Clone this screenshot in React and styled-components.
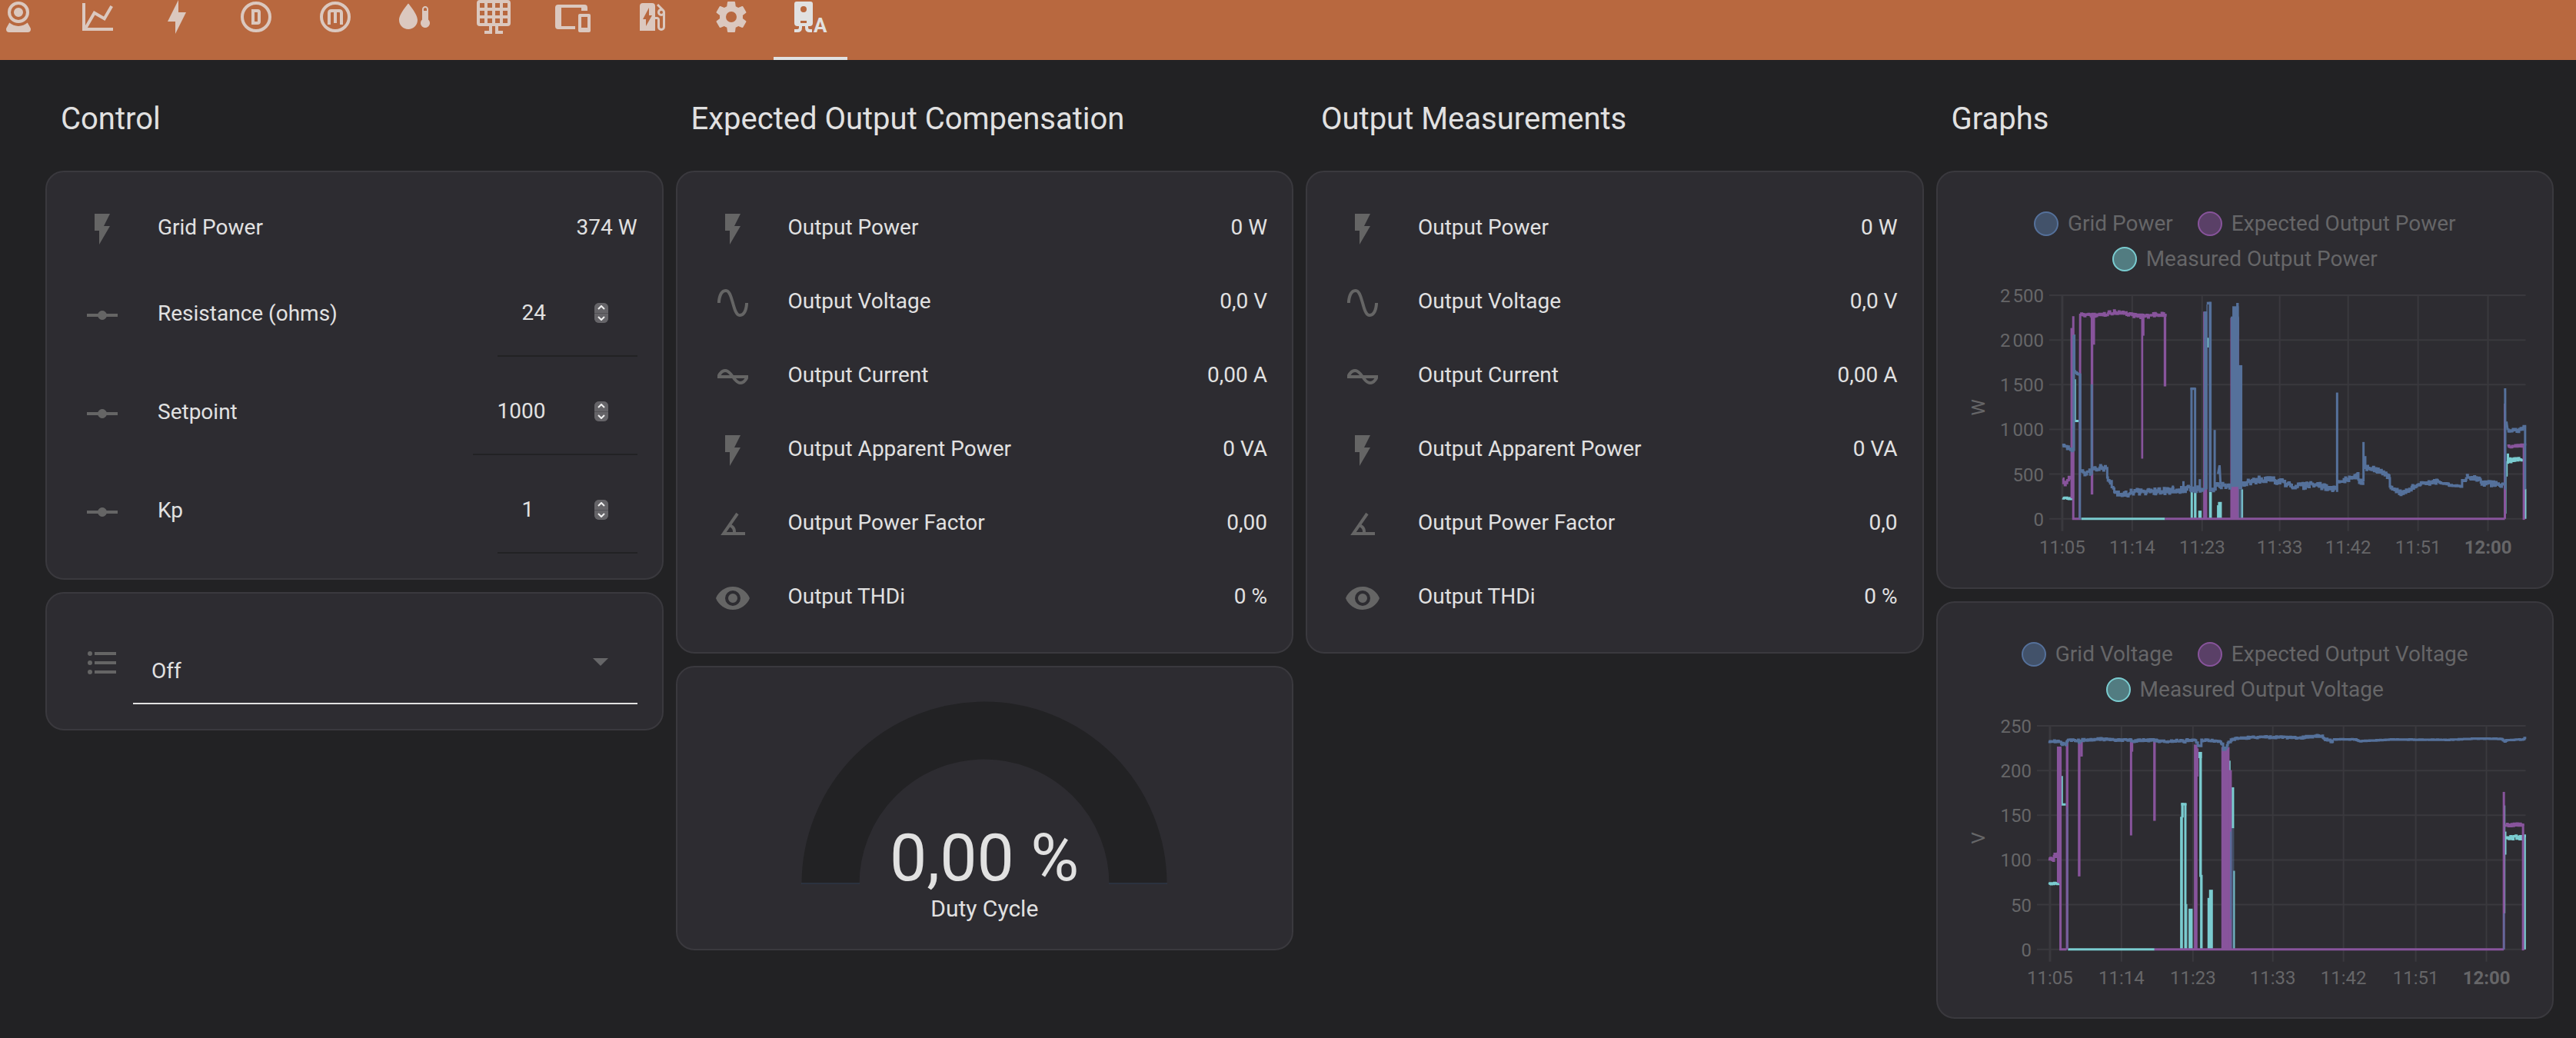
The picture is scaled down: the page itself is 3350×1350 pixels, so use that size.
import React, { useState } from "react";
import styled, { createGlobalStyle } from "styled-components";

const color = {
  page: "#222224",
  card: "#2d2c31",
  border: "#3a393e",
  header: "#b8683f",
  text: "#e1e1e1",
  icon: "#656565",
  muted: "#666668",
  grid: "#3a393e",
  blue: "#55719b",
  purple: "#88549c",
  cyan: "#7accd0",
};

const GlobalStyle = createGlobalStyle`
  * { box-sizing: border-box; }
  body {
    margin: 0;
    background: ${color.page};
    color: ${color.text};
    font-family: Roboto, "Noto Sans", sans-serif;
    font-size: 28px;
    line-height: 40px;
  }
`;

/* ---------- layout ---------- */

const Header = styled.header`
  height: 78px;
  background: ${color.header};
  overflow: hidden;
  display: flex;
  align-items: flex-end;
`;

const Tabs = styled.nav`
  display: flex;
  gap: 7px;
  margin-left: -24px;
`;

const Tab = styled.a`
  width: 96px;
  height: 112px;
  flex: none;
  display: flex;
  align-items: center;
  justify-content: center;
  color: ${(p) => (p.$active ? color.text : "#dbc8bf")};
  border-top: 4px solid transparent;
  border-bottom: 4px solid ${(p) => (p.$active ? color.text : "transparent")};
`;

const Board = styled.main`
  display: grid;
  grid-template-columns: repeat(4, minmax(0, 1fr));
  gap: 16px;
  align-items: start;
  padding: 0 29px 24px 59px;
`;

const Column = styled.section`
  display: flex;
  flex-direction: column;
  gap: 16px;
`;

const Title = styled.h1`
  margin: 0;
  padding: 53px 20px 43px;
  font-size: 40px;
  line-height: 48px;
  font-weight: 400;
  white-space: nowrap;
`;

const Card = styled.div`
  background: ${color.card};
  border: 2px solid ${color.border};
  border-radius: 24px;
  padding: 32px;
  display: flex;
  flex-direction: column;
  gap: 16px;
`;

/* ---------- entity rows ---------- */

const Row = styled.div`
  display: flex;
  align-items: center;
  min-height: ${(p) => (p.$tall ? "112px" : "80px")};
`;

const Badge = styled.span`
  flex: none;
  width: 80px;
  height: 80px;
  padding-top: 3px;
  display: flex;
  align-items: center;
  justify-content: center;
  color: ${color.icon};
`;

const Name = styled.span`
  flex: 1;
  min-width: 0;
  margin-left: 32px;
`;

const Value = styled.span`
  white-space: nowrap;
`;

const NumberField = styled.span`
  width: ${(p) => (p.$wide ? "214px" : "182px")};
  height: 112px;
  padding: 0 38px 0 32px;
  border-bottom: 2px solid ${color.page};
  display: flex;
  align-items: center;
`;

const NumberInput = styled.input`
  flex: 1;
  min-width: 0;
  padding: 0;
  border: 0;
  outline: 0;
  background: none;
  color: inherit;
  font: inherit;
  appearance: textfield;
  &::-webkit-inner-spin-button {
    display: none;
  }
`;

const Stepper = styled.span`
  display: flex;
  flex-direction: column;
  width: 18px;
  height: 26px;
  border-radius: 6px;
  overflow: hidden;
  background: #59585c;
`;

const StepButton = styled.button`
  flex: 1;
  display: flex;
  align-items: center;
  justify-content: center;
  padding: 0;
  border: 0;
  background: #656468;
  color: #f0f0f0;
  & + & {
    border-top: 1px solid #515055;
  }
`;

const SelectField = styled.span`
  position: relative;
  flex: 1;
  height: 112px;
  border-bottom: 2px solid ${color.text};
  display: flex;
`;

const Select = styled.select`
  flex: 1;
  appearance: none;
  border: 0;
  outline: 0;
  padding: 28px 80px 0 24px;
  background: none;
  color: inherit;
  font: inherit;
`;

const SelectArrow = styled.svg`
  position: absolute;
  right: 24px;
  top: 32px;
  color: ${color.muted};
  pointer-events: none;
`;

/* ---------- gauge ---------- */

const GaugeBox = styled.figure`
  margin: 0;
  display: flex;
  flex-direction: column;
  align-items: center;
`;

const GaugeSvg = styled.svg`
  width: 500px;
  max-width: 100%;
  display: block;
  overflow: visible;
`;

const GaugeLabel = styled.figcaption`
  margin-top: 12px;
  font-size: 30px;
  line-height: 40px;
`;

/* ---------- charts ---------- */

const ChartBox = styled.figure`
  margin: 0;
`;

const Legend = styled.ul`
  list-style: none;
  margin: 0;
  padding: 12px 0 0;
  display: flex;
  flex-wrap: wrap;
  justify-content: center;
`;

const LegendItem = styled.li`
  display: flex;
  align-items: center;
  gap: 12px;
  height: 46px;
  padding: 0 16px;
  color: ${color.muted};
`;

const Bullet = styled.span`
  width: 32px;
  height: 32px;
  border-radius: 50%;
  border: 2px solid ${(p) => p.$line};
  background: ${(p) => p.$fill};
`;

const Plot = styled.svg`
  display: block;
  width: 100%;
  height: auto;
  font-size: 24px;
  fill: ${color.muted};
`;

/* ---------- icons ---------- */

const IconSvg = styled.svg`
  width: 48px;
  height: 48px;
  fill: currentColor;
  overflow: visible;
`;

const paths = {
  webcam:
    "M12,2A7,7 0 0,1 19,9A7,7 0 0,1 12,16A7,7 0 0,1 5,9A7,7 0 0,1 12,2M12,4A5,5 0 0,0 7,9A5,5 0 0,0 12,14A5,5 0 0,0 17,9A5,5 0 0,0 12,4M12,6A3,3 0 0,1 15,9A3,3 0 0,1 12,12A3,3 0 0,1 9,9A3,3 0 0,1 12,6M6,22A2,2 0 0,1 4,20C4,19.62 4.1,19.27 4.29,18.97L6.11,15.81C7.69,17.17 9.75,18 12,18C14.25,18 16.31,17.17 17.89,15.81L19.71,18.97C19.9,19.27 20,19.62 20,20A2,2 0 0,1 18,22H6Z",
  chart:
    "M16,11.78L20.24,4.45L21.97,5.45L16.74,14.5L10.23,10.75L5.46,19H22V21H2V3H4V17.54L9.5,8L16,11.78Z",
  bolt: "M11 15H6L13 1V9H18L11 23V15Z",
  water:
    "M19 5C17.89 5 17 5.89 17 7V13.76C16.36 14.33 16 15.15 16 16C16 17.66 17.34 19 19 19S22 17.66 22 16C22 15.15 21.64 14.33 21 13.77V7C21 5.89 20.11 5 19 5M19 6C19.55 6 20 6.45 20 7V8H18V7C18 6.45 18.45 6 19 6M8 3.25C8 3.25 2 10 2 14C2 17.31 4.69 20 8 20S14 17.31 14 14C14 10 8 3.25 8 3.25Z",
  solar:
    "M3 1H21A2 2 0 0 1 23 3V16A2 2 0 0 1 21 18H15V21H18V23H13V18H11V23H6V21H9V18H3A2 2 0 0 1 1 16V3A2 2 0 0 1 3 1M3 3V6H6V3ZM8 3V6H11V3ZM13 3V6H16V3ZM18 3V6H21V3ZM3 8V11H6V8ZM8 8V11H11V8ZM13 8V11H16V8ZM18 8V11H21V8ZM3 13V16H6V13ZM8 13V16H11V13ZM13 13V16H16V13ZM18 13V16H21V13Z",
  devices:
    "M2.5 4H19.5A2 2 0 0 1 21.5 6V8H17.5V6H4.5V18H13.5V20H2.5A2 2 0 0 1 .5 18V6A2 2 0 0 1 2.5 4M16.5 10H22.5A1 1 0 0 1 23.5 11V21A1 1 0 0 1 22.5 22H16.5A1 1 0 0 1 15.5 21V11A1 1 0 0 1 16.5 10M17.5 12V19H21.5V12Z",
  ev: "M19.77,7.23L19.78,7.22L16.06,3.5L15,4.56L17.11,6.67C16.17,7.03 15.5,7.93 15.5,9A2.5,2.5 0 0,0 18,11.5C18.36,11.5 18.69,11.42 19,11.29V18.5A1,1 0 0,1 18,19.5A1,1 0 0,1 17,18.5V14A2,2 0 0,0 15,12H14V5A2,2 0 0,0 12,3H6A2,2 0 0,0 4,5V21H14V13.5H15.5V18.5A2.5,2.5 0 0,0 18,21A2.5,2.5 0 0,0 20.5,18.5V9C20.5,8.31 20.22,7.68 19.77,7.23M18,10A1,1 0 0,1 17,9A1,1 0 0,1 18,8A1,1 0 0,1 19,9A1,1 0 0,1 18,10M8,18V13.5H6L10,6V11H12L8,18Z",
  cog: "M12,15.5A3.5,3.5 0 0,1 8.5,12A3.5,3.5 0 0,1 12,8.5A3.5,3.5 0 0,1 15.5,12A3.5,3.5 0 0,1 12,15.5M19.43,12.97C19.47,12.65 19.5,12.33 19.5,12C19.5,11.67 19.47,11.34 19.43,11L21.54,9.37C21.73,9.22 21.78,8.95 21.66,8.73L19.66,5.27C19.54,5.05 19.27,4.96 19.05,5.05L16.56,6.05C16.04,5.66 15.5,5.32 14.87,5.07L14.5,2.42C14.46,2.18 14.25,2 14,2H10C9.75,2 9.54,2.18 9.5,2.42L9.13,5.07C8.5,5.32 7.96,5.66 7.44,6.05L4.95,5.05C4.73,4.96 4.46,5.05 4.34,5.27L2.34,8.73C2.21,8.95 2.27,9.22 2.46,9.37L4.57,11C4.53,11.34 4.5,11.67 4.5,12C4.5,12.33 4.53,12.65 4.57,12.97L2.46,14.63C2.27,14.78 2.21,15.05 2.34,15.27L4.34,18.73C4.46,18.95 4.73,19.03 4.95,18.95L7.44,17.94C7.96,18.34 8.5,18.68 9.13,18.93L9.5,21.58C9.54,21.82 9.75,22 10,22H14C14.25,22 14.46,21.82 14.5,21.58L14.87,18.93C15.5,18.67 16.04,18.34 16.56,17.94L19.05,18.95C19.27,19.03 19.54,18.95 19.66,18.73L21.66,15.27C21.78,15.05 21.73,14.78 21.54,14.63L19.43,12.97Z",
  flash: "M7,2V13H10V22L17,10H13L17,2H7Z",
  sine: "M16.5,21C13.5,21 12.31,16.76 11.05,12.28C10.14,9.04 9,5 7.5,5C4.11,5 4,11.93 4,12H2C2,11.63 2.06,3 7.5,3C10.5,3 11.71,7.25 12.97,11.74C13.83,14.8 15,19 16.5,19C19.94,19 20.03,12.07 20.03,12H22.03C22.03,12.37 21.97,21 16.5,21Z",
  current:
    "M12.43 11C12.28 10.84 10 7 7 7S2.32 10.18 2 11V13H11.57C11.72 13.16 14 17 17 17S21.68 13.82 22 13V11H12.43M7 9C8.17 9 9.18 9.85 10 11H4.31C4.78 10.17 5.54 9 7 9M17 15C15.83 15 14.82 14.15 14 13H19.69C19.22 13.83 18.46 15 17 15Z",
  angle:
    "M20,19H4.09L14.18,4.43L15.82,5.57L11.28,12.13C12.89,12.96 14,14.62 14,16.54C14,16.7 14,16.85 13.97,17H20V19M7.91,17H11.96C12,16.85 12,16.7 12,16.54C12,15.28 11.24,14.22 10.14,13.78L7.91,17Z",
  eye: "M12,9A3,3 0 0,0 9,12A3,3 0 0,0 12,15A3,3 0 0,0 15,12A3,3 0 0,0 12,9M12,17A5,5 0 0,1 7,12A5,5 0 0,1 12,7A5,5 0 0,1 17,12A5,5 0 0,1 12,17M12,4.5C7,4.5 2.73,7.61 1,12C2.73,16.39 7,19.5 12,19.5C17,19.5 21.27,16.39 23,12C21.27,7.61 17,4.5 12,4.5Z",
  vertex:
    "M22,11H14.82C14.4,9.84 13.3,9 12,9C10.7,9 9.6,9.84 9.18,11H2V13H9.18C9.6,14.16 10.7,15 12,15C13.3,15 14.4,14.16 14.82,13H22V11Z",
  list: "M7,5H21V7H7V5M7,13V11H21V13H7M7,19V17H21V19H7M4,4.5A1.5,1.5 0 0,1 4,7.5A1.5,1.5 0 0,1 4,4.5M4,10.5A1.5,1.5 0 0,1 4,13.5A1.5,1.5 0 0,1 4,10.5M4,16.5A1.5,1.5 0 0,1 4,19.5A1.5,1.5 0 0,1 4,16.5Z",
};

function Icon({ name }) {
  return (
    <IconSvg viewBox="0 0 24 24" aria-hidden="true">
      {paths[name] && <path fillRule="evenodd" d={paths[name]} />}
      {(name === "ringD" || name === "ringM") && (
        <g fill="none" stroke="currentColor" strokeWidth="2">
          <circle cx="12" cy="12" r="9" />
          {name === "ringD" ? (
            <path d="M10 8H13A1 1 0 0 1 14 9V15A1 1 0 0 1 13 16H10Z" />
          ) : (
            <path d="M8 17V9.5Q8 8 9.5 8H14.5Q16 8 16 9.5V17M12 8V16" />
          )}
        </g>
      )}
      {name === "heaterA" && (
        <>
          <path
            fillRule="evenodd"
            d="M3 2H12A1.5 1.5 0 0 1 13.5 3.5V16A2 2 0 0 1 11.5 18H3.5A2 2 0 0 1 1.5 16V3.5A1.5 1.5 0 0 1 3 2M7.5 5A2 2 0 0 0 7.5 9A2 2 0 0 0 7.5 5M5.5 14.5V16H9.5V14.5Z"
          />
          <path
            d="M5.5 17V19Q5.5 21 3.5 21H1.5M9.5 17V19Q9.5 21 11.5 21H13"
            fill="none"
            stroke="currentColor"
            strokeWidth="2"
          />
          <text x="14" y="22" fontSize="13" fontWeight="700">
            A
          </text>
        </>
      )}
    </IconSvg>
  );
}

/* ---------- chart data ----------
   Samples are on a fine grid, three units to a pixel, with the top of the
   value axis at y = 42 and zero at y = 915. */

const TOP = 42;
const ZERO = 915;

const powerChart = {
  unit: "W",
  title: "Power",
  offset: 109,
  axis: 130,
  ticks: ["2\u202f500", "2\u202f000", "1\u202f500", "1\u202f000", "500", "0"],
  times: [130, 221, 312, 413, 502, 593, 684],
  series: [
    {
      stroke: color.cyan,
      runs: [
        { pts: [[64, 835], [103, 836]], amp: 3 },
        { pts: [[112, 370], [112, 533], [128, 533]], amp: 0 },
        { pts: [[137, 915], [464, 915]], amp: 0 },
        { pts: [[1804, 686], [1862, 686]], amp: 8 },
        { pts: [[1803, 660], [1803, 700]], amp: 0 },
      ],
      bars: [
        [564, 573, 800], [577, 587, 806], [594, 607, 883], [627, 635, 208, 246],
        [636, 647, 810], [667, 673, 862], [671, 686, 849], [760, 769, 800],
        [1796, 1802, 690, 750], [1792, 1797, 750, 895], [1867, 1875, 798],
      ],
    },
    {
      stroke: color.purple,
      runs: [
        { pts: [[65, 758], [70, 778], [76, 775], [82, 760], [98, 752]], amp: 8 },
        { pts: [[106, 124], [106, 915], [131, 915], [133, 114]], amp: 0 },
        { pts: [[134, 116], [150, 122], [220, 118], [262, 108], [320, 114], [345, 122], [395, 126], [430, 114], [466, 120]], amp: 7 },
        { pts: [[464, 915], [1791, 915]], amp: 0 },
        { pts: [[1802, 632], [1870, 627]], amp: 5 },
        { pts: [[1791, 465], [1791, 915]], amp: 0 },
        { pts: [[1865, 630], [1865, 919]], amp: 0 },
      ],
      bars: [
        [95, 109, 170, 835], [174, 184, 116, 820], [183, 191, 116, 235],
        [371, 379, 116, 680], [378, 384, 116, 200], [459, 469, 116, 398],
        [613, 629, 106], [719, 753, 130],
      ],
    },
    {
      stroke: color.blue,
      runs: [
        { pts: [[64, 632], [74, 628], [82, 636], [95, 650], [104, 650]], amp: 10 },
        { pts: [[108, 200], [110, 340], [122, 352], [131, 352], [133, 728]], amp: 3 },
        { pts: [[135, 726], [150, 738], [166, 730], [178, 738]], amp: 10 },
        { pts: [[178, 390], [178, 742]], amp: 0 },
        { pts: [[180, 715], [205, 715], [236, 720], [241, 768], [262, 788], [266, 812], [310, 820], [345, 808], [420, 808], [490, 806], [530, 802], [560, 798], [615, 800]], amp: 12 },
        { pts: [[495, 785], [495, 800]], amp: 0 },
        { pts: [[536, 768], [536, 800]], amp: 0 },
        { pts: [[600, 760], [600, 800]], amp: 0 },
        { pts: [[645, 803], [655, 798], [665, 786], [700, 784], [722, 790]], amp: 11 },
        { pts: [[658, 568], [658, 800]], amp: 0 },
        { pts: [[671, 740], [677, 706], [681, 780]], amp: 0 },
        { pts: [[766, 784], [800, 768], [830, 762], [890, 764], [930, 776], [980, 788], [1050, 782], [1090, 790], [1120, 800], [1134, 804]], amp: 12 },
        { pts: [[1136, 422], [1136, 810]], amp: 0 },
        { pts: [[1138, 768], [1180, 760], [1216, 746], [1222, 770], [1238, 772]], amp: 9 },
        { pts: [[1239, 615], [1239, 770]], amp: 0 },
        { pts: [[1246, 670], [1246, 720]], amp: 0 },
        { pts: [[1242, 715], [1280, 720], [1310, 734], [1340, 752], [1342, 795], [1390, 816], [1430, 792], [1475, 776], [1530, 770]], amp: 9 },
        { pts: [[1530, 770], [1545, 777], [1570, 778], [1572, 784], [1620, 788], [1624, 766], [1638, 765], [1640, 750]], amp: 2 },
        { pts: [[1640, 748], [1665, 756], [1690, 756], [1697, 776], [1740, 778], [1788, 784]], amp: 10 },
        { pts: [[1792, 405], [1793, 800]], amp: 0 },
        { pts: [[1797, 535], [1802, 568]], amp: 0 },
        { pts: [[1802, 567], [1840, 570], [1850, 560], [1870, 560]], amp: 9 },
        { pts: [[1870, 556], [1870, 800]], amp: 0 },
      ],
      bars: [
        [103, 113, 198, 650], [128, 136, 350, 915],
        [563, 572, 404, 800], [563, 584, 402, 412], [577, 586, 404, 806],
        [616, 628, 105, 800], [627, 645, 68, 78], [635, 646, 68, 810], [626, 630, 78, 800],
        [721, 753, 125, 790], [727, 752, 85, 200], [742, 752, 72, 200], [750, 766, 315, 800],
      ],
      shade: [[750, 766, 800, 910]],
    },
  ],
};

const voltageChart = {
  unit: "V",
  title: "Voltage",
  offset: 88,
  axis: 114,
  ticks: ["250", "200", "150", "100", "50", "0"],
  times: [114, 207, 300, 404, 496, 590, 682],
  series: [
    {
      stroke: color.cyan,
      runs: [
        { pts: [[73, 657], [113, 659]], amp: 3 },
        { pts: [[124, 238], [124, 349], [140, 349]], amp: 0 },
        { pts: [[148, 915], [486, 915]], amp: 0 },
        { pts: [[1858, 477], [1932, 477]], amp: 8 },
      ],
      bars: [
        [586, 597, 397], [590, 600, 343, 400], [590, 611, 343, 353], [602, 611, 345], [610, 614, 738],
        [619, 635, 756], [654, 671, 144, 168], [661, 671, 144, 632], [664, 674, 624],
        [693, 700, 714], [699, 714, 682], [787, 797, 282, 442], [793, 800, 608],
        [776, 783, 178, 260], [1850, 1856, 353, 774], [1853, 1860, 455, 545], [1928, 1936, 470],
      ],
    },
    {
      stroke: color.purple,
      runs: [
        { pts: [[73, 560], [80, 562], [88, 565], [96, 552], [108, 545]], amp: 10 },
        { pts: [[119, 130], [119, 915], [143, 915]], amp: 0 },
        { pts: [[486, 915], [1850, 915]], amp: 0 },
        { pts: [[1850, 300], [1850, 915]], amp: 0 },
        { pts: [[1856, 430], [1925, 427]], amp: 5 },
        { pts: [[1925, 427], [1925, 919]], amp: 0 },
      ],
      bars: [
        [105, 123, 123, 655], [140, 150, 100], [187, 197, 100, 630], [196, 206, 100, 162],
        [390, 399, 100, 470], [397, 403, 100, 143], [481, 491, 100, 413], [640, 654, 115],
        [653, 658, 130, 240], [747, 779, 125], [777, 788, 215],
      ],
    },
    {
      stroke: color.blue,
      runs: [
        { pts: [[73, 103], [115, 102], [122, 112], [140, 115], [145, 98], [188, 98], [193, 108], [198, 98], [270, 94], [330, 97], [390, 98], [405, 102], [430, 98], [480, 98], [515, 104], [590, 99], [600, 108], [610, 98], [642, 97], [652, 110], [658, 122], [665, 118], [669, 100], [700, 98], [740, 106], [752, 112]], amp: 4 },
        { pts: [[750, 112], [754, 126], [766, 122], [778, 112], [784, 100]], amp: 12 },
        { pts: [[784, 100], [800, 92], [880, 86], [1027, 88], [1044, 90], [1117, 81], [1141, 84], [1149, 95], [1170, 96], [1177, 108], [1182, 96]], amp: 4 },
        { pts: [[1182, 95], [1271, 95], [1284, 102], [1385, 97], [1418, 95], [1629, 97], [1743, 92], [1840, 93], [1853, 103], [1860, 98], [1928, 95], [1933, 84]], amp: 1 },
      ],
      bars: [[781, 786, 455, 797], [1848, 1853, 774, 915]],
      shade: [[785, 797, 442, 910], [143, 149, 360, 910]],
    },
  ],
};

function noisyPath(pts, amp) {
  if (!amp) return "M" + pts.map((p) => p.join(" ")).join("L");
  let seed = pts[0][0] * 31 + pts[0][1];
  const next = () => {
    seed = (seed * 1103515245 + 12345) % 2147483648;
    return seed / 2147483648 - 0.5;
  };
  let d = `M${pts[0][0]} ${pts[0][1]}`;
  for (let i = 1; i < pts.length; i++) {
    const [x0, y0] = pts[i - 1];
    const [x1, y1] = pts[i];
    const steps = Math.max(1, Math.round((x1 - x0) / 3));
    for (let s = 1; s <= steps; s++) {
      const t = s / steps;
      d += `H${x0 + (x1 - x0) * t}V${y0 + (y1 - y0) * t + next() * 2 * amp}`;
    }
  }
  return d;
}

function Chart({ chart }) {
  const names = [
    ["Grid " + chart.title, color.blue, "#42526a"],
    ["Expected Output " + chart.title, color.purple, "#5a4067"],
    ["Measured Output " + chart.title, color.cyan, "#527c81"],
  ];
  return (
    <Card>
      <ChartBox>
        <Legend>
          {names.map(([label, line, fill]) => (
            <LegendItem key={label}>
              <Bullet $line={line} $fill={fill} />
              {label}
            </LegendItem>
          ))}
        </Legend>
        <Plot viewBox="0 0 736 372" role="img" aria-label={chart.title + " history"}>
          <g fill="none" stroke={color.grid} strokeWidth="2">
            {chart.ticks.map((t, i) => (
              <path key={t} d={`M${chart.axis - 17} ${24 + i * 58.2}H733`} />
            ))}
            {chart.times.map((x, i) => (
              <path key={x} strokeWidth={i ? 2 : 3} d={`M${x} 24V331`} />
            ))}
          </g>
          {chart.ticks.map((t, i) => (
            <text key={t} x={chart.axis - 24} y={33 + i * 58.2} textAnchor="end">
              {t}
            </text>
          ))}
          {["11:05", "11:14", "11:23", "11:33", "11:42", "11:51", "12:00"].map((t, i) => (
            <text
              key={t}
              x={chart.times[i]}
              y="360"
              textAnchor="middle"
              fontWeight={t === "12:00" ? 700 : 400}
            >
              {t}
            </text>
          ))}
          <text transform="translate(29 170) rotate(-90)" textAnchor="middle">
            {chart.unit}
          </text>
          <g transform={`translate(${chart.offset} 10) scale(0.33333)`}>
            {chart.series.map((s) => (
              <g key={s.stroke}>
                {s.bars.map(([x0, x1, y0, y1 = ZERO], i) => (
                  <rect key={i} x={x0} y={Math.max(y0, TOP)} width={x1 - x0} height={y1 - y0} fill={s.stroke} />
                ))}
                {(s.shade || []).map(([x0, x1, y0, y1], i) => (
                  <rect key={i} x={x0} y={y0} width={x1 - x0} height={y1 - y0} fill={s.stroke} opacity="0.5" />
                ))}
                {s.runs.map((r, i) => (
                  <path key={i} d={noisyPath(r.pts, r.amp)} fill="none" stroke={s.stroke} strokeWidth="9" />
                ))}
              </g>
            ))}
          </g>
        </Plot>
      </ChartBox>
    </Card>
  );
}

/* ---------- page parts ---------- */

function Sensor({ icon, name, value }) {
  return (
    <Row>
      <Badge>
        <Icon name={icon} />
      </Badge>
      <Name>{name}</Name>
      <Value>{value}</Value>
    </Row>
  );
}

function NumberRow({ id, name, initial, wide }) {
  const [value, setValue] = useState(initial);
  const step = (d) => setValue((v) => Number(v) + d);
  return (
    <Row $tall>
      <Badge>
        <Icon name="vertex" />
      </Badge>
      <Name as="label" htmlFor={id}>
        {name}
      </Name>
      <NumberField $wide={wide}>
        <NumberInput id={id} type="number" value={value} onChange={(e) => setValue(e.target.value)} />
        <Stepper>
          <StepButton type="button" aria-label={"Increase " + name} onClick={() => step(1)}>
            <svg width="10" height="6" viewBox="0 0 10 6" fill="none" stroke="currentColor" strokeWidth="2">
              <path d="M1 5L5 1L9 5" />
            </svg>
          </StepButton>
          <StepButton type="button" aria-label={"Decrease " + name} onClick={() => step(-1)}>
            <svg width="10" height="6" viewBox="0 0 10 6" fill="none" stroke="currentColor" strokeWidth="2">
              <path d="M1 1L5 5L9 1" />
            </svg>
          </StepButton>
        </Stepper>
      </NumberField>
    </Row>
  );
}

const tabs = [
  ["webcam", "Cameras"],
  ["chart", "Statistics"],
  ["bolt", "Energy"],
  ["ringD", "D"],
  ["ringM", "M"],
  ["water", "Water"],
  ["solar", "Solar"],
  ["devices", "Devices"],
  ["ev", "Charging"],
  ["cog", "Settings"],
  ["heaterA", "Heater A"],
];

const outputs = (powerFactor) => [
  ["flash", "Output Power", "0 W"],
  ["sine", "Output Voltage", "0,0 V"],
  ["current", "Output Current", "0,00 A"],
  ["flash", "Output Apparent Power", "0 VA"],
  ["angle", "Output Power Factor", powerFactor],
  ["eye", "Output THDi", "0 %"],
];

function OutputCard({ powerFactor }) {
  return (
    <Card>
      {outputs(powerFactor).map(([icon, name, value]) => (
        <Sensor key={name} icon={icon} name={name} value={value} />
      ))}
    </Card>
  );
}

export default function App() {
  return (
    <>
      <GlobalStyle />
      <Header>
        <Tabs>
          {tabs.map(([icon, label]) => (
            <Tab key={icon} href={"#" + icon} aria-label={label} $active={icon === "heaterA"}>
              <Icon name={icon} />
            </Tab>
          ))}
        </Tabs>
      </Header>
      <Board>
        <div>
          <Title>Control</Title>
          <Column>
            <Card>
              <Sensor icon="flash" name="Grid Power" value="374 W" />
              <NumberRow id="resistance" name="Resistance (ohms)" initial={24} />
              <NumberRow id="setpoint" name="Setpoint" initial={1000} wide />
              <NumberRow id="kp" name="Kp" initial={1} />
            </Card>
            <Card>
              <Row $tall>
                <Badge>
                  <Icon name="list" />
                </Badge>
                <SelectField>
                  <Select aria-label="Mode" defaultValue="Off">
                    <option>Off</option>
                  </Select>
                  <SelectArrow width="48" height="48" viewBox="0 0 24 24" fill="currentColor" aria-hidden="true">
                    <path d="M7 10L12 15L17 10Z" />
                  </SelectArrow>
                </SelectField>
              </Row>
            </Card>
          </Column>
        </div>
        <div>
          <Title>Expected Output Compensation</Title>
          <Column>
            <OutputCard powerFactor="0,00" />
            <Card>
              <GaugeBox>
                <GaugeSvg viewBox="0 0 500 250">
                  <path d="M50 250A200 200 0 0 1 450 250" fill="none" stroke={color.page} strokeWidth="75" />
                  <path d="M12 249H88M412 249H488" stroke="#34425a" strokeWidth="1" />
                  <text x="250" y="245" fontSize="86" textAnchor="middle" fill={color.text}>
                    0,00 %
                  </text>
                </GaugeSvg>
                <GaugeLabel>Duty Cycle</GaugeLabel>
              </GaugeBox>
            </Card>
          </Column>
        </div>
        <div>
          <Title>Output Measurements</Title>
          <Column>
            <OutputCard powerFactor="0,0" />
          </Column>
        </div>
        <div>
          <Title>Graphs</Title>
          <Column>
            <Chart chart={powerChart} />
            <Chart chart={voltageChart} />
          </Column>
        </div>
      </Board>
    </>
  );
}
